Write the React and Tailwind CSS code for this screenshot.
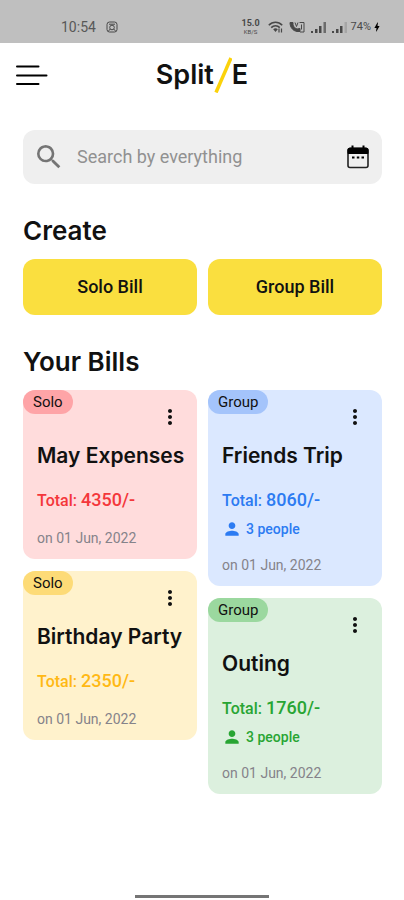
import { MdBolt, MdMoreVert, MdPerson, MdSearch } from "react-icons/md";

const themes = {
  red: { card: "bg-[#ffdcdc]", badge: "bg-[#fea4a7]", text: "text-[#f4373b]" },
  blue: { card: "bg-[#dbe8ff]", badge: "bg-[#a4c4fb]", text: "text-[#2c7bf2]" },
  yellow: { card: "bg-[#fff2cc]", badge: "bg-[#fddb77]", text: "text-[#ffb914]" },
  green: { card: "bg-[#dcf0de]", badge: "bg-[#9bd89f]", text: "text-[#28a533]" },
};

// Two independent columns, so that cards of different heights stack tightly.
const columns = [
  [
    { title: "May Expenses", kind: "Solo", total: 4350, date: "01 Jun, 2022", theme: "red" },
    { title: "Birthday Party", kind: "Solo", total: 2350, date: "01 Jun, 2022", theme: "yellow" },
  ],
  [
    { title: "Friends Trip", kind: "Group", total: 8060, people: 3, date: "01 Jun, 2022", theme: "blue" },
    { title: "Outing", kind: "Group", total: 1760, people: 3, date: "01 Jun, 2022", theme: "green" },
  ],
];

function SignalIcon({ last }) {
  return (
    <svg width="16" height="12" viewBox="0 0 16 12" fill="currentColor" aria-hidden="true">
      <rect x="0" y="10" width="2" height="2" />
      <rect x="4" y="8" width="2.500" height="4" />
      <rect x="8" y="5" width="2.500" height="7" />
      <rect x="12.500" y="1" width="2.500" height="11" opacity={last} />
    </svg>
  );
}

function CalendarIcon() {
  return (
    <svg width="22" height="24" viewBox="0 0 22 24" fill="none" aria-hidden="true">
      <rect x="1" y="3.500" width="20" height="19" rx="2" stroke="#222" strokeWidth="1.600" />
      <path d="M1 8.500V5a2 2 0 0 1 2-2h16a2 2 0 0 1 2 2v3.500z" fill="black" stroke="black" />
      <path d="M5.500 .5v4M16.500 .5v4" stroke="black" strokeWidth="2" />
      <path d="M5 12.500h2.500M9.800 12.500h2.500M14.500 12.500H17" stroke="black" strokeWidth="2" />
    </svg>
  );
}

function StatusBar() {
  return (
    <div className="flex h-[43px] items-center bg-[#bfbfbf] pt-[10px] pr-[25px] pl-[61px] text-[#484848]">
      <span className="text-sm leading-4 text-[#585858]">10:54</span>
      <svg className="ml-[10px]" width="12" height="12" viewBox="0 0 12 12" fill="none" stroke="currentColor" aria-hidden="true">
        <rect x="1" y="1" width="10" height="10" rx="2.5" />
        <circle cx="6" cy="6.5" r="2.3" />
        <path d="M3 3.2h6M2.5 10l1.8-2M9.5 10L7.7 8" />
      </svg>
      <div className="ml-auto flex items-center">
        <div className="flex flex-col items-center">
          <span className="text-[9px] leading-[9px] font-bold">15.0</span>
          <span className="text-[6px] leading-[7px]">KB/S</span>
        </div>
        <svg className="ml-2" width="16" height="12" viewBox="0 0 16 12" fill="none" stroke="currentColor" strokeWidth="1.6" aria-hidden="true">
          <path d="M.8 4.2C4.6.2 10.4.2 14.2 4.2M3.2 6.6c2.500-2.500 6.100-2.500 8.600 0" />
          <path d="M5.200 8.200c1.400-1.200 3.200-1.200 4.600 0L7.500 11z" fill="currentColor" stroke="none" />
          <path d="M11 7.500v4M13.500 7.500v4" strokeWidth="1.200" />
        </svg>
        <svg className="ml-[5px]" width="16" height="12" viewBox="0 0 16 12" fill="none" stroke="currentColor" aria-hidden="true">
          <path d="M1 1.500h3v2.500c.8 2 2 3.200 4 4l3-.5v3H8C4 9.800 1 6.500 1 1.500z" fill="currentColor" />
          <path d="M6 1.500l1.500 4L9 1.500M10.500 1.500h4.500v9.500h-4M12.500 3.500v5" />
        </svg>
        <span className="ml-[6px] flex gap-[5px]">
          <SignalIcon last={0.7} />
          <SignalIcon last={0.2} />
        </span>
        <span className="ml-[3px] text-[11px] leading-4">74%</span>
        <MdBolt className="-mr-1 size-3 text-black" aria-hidden="true" />
      </div>
    </div>
  );
}

function Header() {
  return (
    <header className="grid h-16 grid-cols-[1fr_auto_1fr] items-center px-4">
      <button type="button" aria-label="Menu" className="w-8">
        <svg width="32" height="20" viewBox="0 0 32 20" fill="none" stroke="black" strokeWidth="2" strokeLinecap="round" aria-hidden="true">
          <path d="M1 1.500h21.500M1 10.500h29.500M1 19h21.500" />
        </svg>
      </button>
      <h1 className="flex items-center font-[Inter,sans-serif] text-[27px] leading-9 font-semibold">
        Split
        <svg width="18" height="36" viewBox="0 0 18 36" fill="none" stroke="#fbd20b" strokeWidth="3.500" aria-hidden="true">
          <path d="M2 35.500L17 1" />
        </svg>
        E
      </h1>
    </header>
  );
}

function SearchBox() {
  return (
    <div className="mt-[23px] flex h-[54px] items-center rounded-xl bg-[#efefef] pr-[13px] pl-[10px]">
      <MdSearch className="size-8 shrink-0 text-[#757575]" aria-hidden="true" />
      <input
        type="search"
        aria-label="Search bills"
        placeholder="Search by everything"
        className="ml-3 min-w-0 flex-1 bg-transparent text-lg outline-none placeholder:text-[#919191]"
      />
      <button type="button" aria-label="Pick a date">
        <CalendarIcon />
      </button>
    </div>
  );
}

function SectionTitle({ children }) {
  return <h2 className="font-[Inter,sans-serif] text-[26px] leading-8 font-semibold">{children}</h2>;
}

function CreateButton({ children }) {
  return (
    <button type="button" className="h-14 flex-1 rounded-xl bg-[#fadf3f] text-lg font-medium">
      {children}
    </button>
  );
}

function BillCard({ title, kind, total, people, date, theme }) {
  const t = themes[theme];
  return (
    <article className={`rounded-xl pb-[11px] ${t.card}`}>
      <div className="flex items-start justify-between">
        <span className={`rounded-full px-[10px] text-[15px] leading-6 ${t.badge}`}>{kind}</span>
        <button type="button" aria-label={`Options for ${title}`} className="mt-[15px] mr-[15px]">
          <MdMoreVert className="size-6" />
        </button>
      </div>
      <div className="pl-[14px]">
        <h3 className="mt-[13px] font-[Inter,sans-serif] text-[21px] leading-7 font-semibold whitespace-nowrap">{title}</h3>
        <p className={`mt-[18px] flex h-6 items-baseline gap-1 text-base leading-6 font-medium ${t.text}`}>
          Total: <span className="text-lg leading-6">{total}/-</span>
        </p>
        {people && (
          <p className={`mt-[7px] flex h-5 items-center gap-1 text-sm leading-5 font-medium ${t.text}`}>
            <MdPerson className="size-5" aria-hidden="true" />
            {people} people
          </p>
        )}
        <p className="mt-4 text-sm leading-5 text-[#85838a]">on {date}</p>
      </div>
    </article>
  );
}

export default function App() {
  return (
    <div className="flex min-h-screen flex-col bg-white font-[Roboto,sans-serif] text-[#111]">
      <StatusBar />
      <Header />
      <main className="pr-[22px] pl-[23px]">
        <SearchBox />
        <section className="mt-[31px]">
          <SectionTitle>Create</SectionTitle>
          <div className="mt-3 flex gap-[11px]">
            <CreateButton>Solo Bill</CreateButton>
            <CreateButton>Group Bill</CreateButton>
          </div>
        </section>
        <section className="mt-[31px]">
          <SectionTitle>Your Bills</SectionTitle>
          <div className="mt-3 grid grid-cols-2 gap-[11px]">
            {columns.map((bills, i) => (
              <div key={i} className="flex flex-col gap-3">
                {bills.map((b) => (
                  <BillCard key={b.title} {...b} />
                ))}
              </div>
            ))}
          </div>
        </section>
      </main>
      <div className="mx-auto mt-auto mb-[2px] h-[3px] w-1/3 bg-[#757575]" />
    </div>
  );
}
